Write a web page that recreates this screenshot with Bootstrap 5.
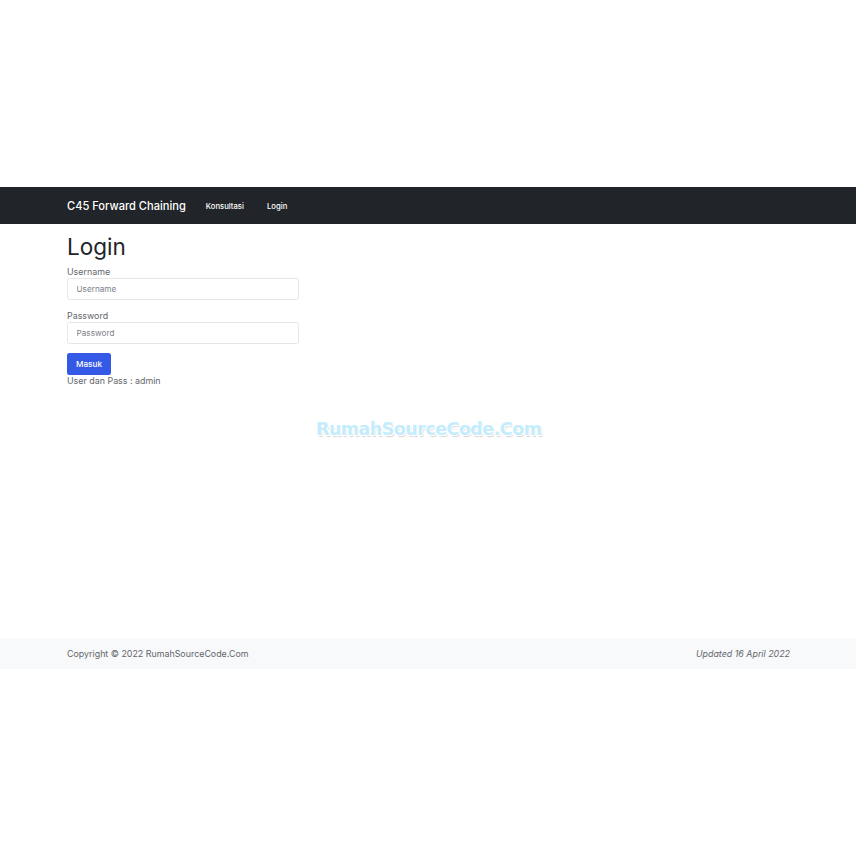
<!DOCTYPE html>
<html lang="id">
<head>
    <meta charset="UTF-8">
    <meta name="viewport" content="width=device-width, initial-scale=1.0">
    <title>Login</title>
    <link href="https://cdn.jsdelivr.net/npm/bootstrap@5.3.3/dist/css/bootstrap.min.css" rel="stylesheet">
    <style>
        body {
            background-color: #fff;
            font-family: Inter, "Liberation Sans", sans-serif;
            font-size: 8.9px;
            color: #63666b;
            position: relative;
            padding-top: 187px;
            min-height: 856px;
        }
        .page-wrap {
            width: 723px;
            margin-left: 67px;
        }
        .top-bar {
            height: 37px;
            background-color: #212529;
            padding: 0;
        }
        .top-bar .navbar-brand {
            font-size: 11.1px;
            font-weight: 500;
            color: #fff;
            padding: 1px 0 0;
            margin-right: 20px;
        }
        .top-bar .navbar-nav .nav-link {
            font-size: 7.7px;
            font-weight: 500;
            color: #fff;
            padding: 2px 0 0;
            margin-right: 23px;
        }
        .content-area {
            height: 414px;
            padding-top: 8px;
        }
        .page-title {
            font-size: 22.5px;
            font-weight: 400;
            line-height: 29px;
            color: #212529;
            margin: 0 0 4px;
            padding: 0;
        }
        .field-label {
            display: block;
            line-height: 12px;
            margin: 0 0 1px;
            position: relative;
            top: 0.5px;
        }
        .login-input {
            width: 232px;
            height: 22px;
            font-size: 8.2px;
            padding: 0 8.5px;
            border: 1px solid #e3e6ea;
            border-radius: 2.5px;
            margin-bottom: 9px;
        }
        .login-input::placeholder {
            color: #7d8187;
        }
        .login-btn {
            width: 44px;
            height: 22px;
            font-size: 8.2px;
            font-weight: 500;
            padding: 0;
            background-color: #3459e6;
            border: 0;
            border-radius: 2.5px;
            display: block;
        }
        .login-hint {
            line-height: 12px;
        }
        .site-footer {
            height: 31px;
            background-color: #f8f9fa;
        }
        .site-footer .page-wrap {
            height: 31px;
        }
        .watermark {
            position: absolute;
            left: 316px;
            top: 417px;
            font-family: "DejaVu Sans", sans-serif;
            font-size: 17.5px;
            font-weight: 700;
            line-height: 24px;
            letter-spacing: -0.53px;
            color: #c4ecfd;
            text-shadow: 1px 1px 0 #fff, -1px -1px 0 #fff, 1px -1px 0 #fff, -1px 1px 0 #fff, 1.5px 2px 1px #d4d4d4;
            white-space: nowrap;
        }
    </style>
</head>
<body>

    <nav class="navbar navbar-expand top-bar">
        <div class="page-wrap d-flex align-items-center">
            <a class="navbar-brand" href="#">C45 Forward Chaining</a>
            <div class="navbar-nav">
                <a class="nav-link" href="#">Konsultasi</a>
                <a class="nav-link" href="#">Login</a>
            </div>
        </div>
    </nav>

    <div class="content-area">
        <div class="page-wrap">
            <h1 class="page-title">Login</h1>
            <form>
                <label class="field-label" for="username">Username</label>
                <input type="text" class="form-control login-input" id="username" placeholder="Username">
                <label class="field-label" for="password">Password</label>
                <input type="password" class="form-control login-input" id="password" placeholder="Password">
                <button type="button" class="btn btn-primary login-btn">Masuk</button>
            </form>
            <div class="login-hint">User dan Pass : admin</div>
        </div>
    </div>

    <footer class="site-footer">
        <div class="page-wrap d-flex justify-content-between align-items-center">
            <span>Copyright © 2022 RumahSourceCode.Com</span>
            <em>Updated 16 April 2022</em>
        </div>
    </footer>

    <div class="watermark">RumahSourceCode.Com</div>

</body>
</html>
